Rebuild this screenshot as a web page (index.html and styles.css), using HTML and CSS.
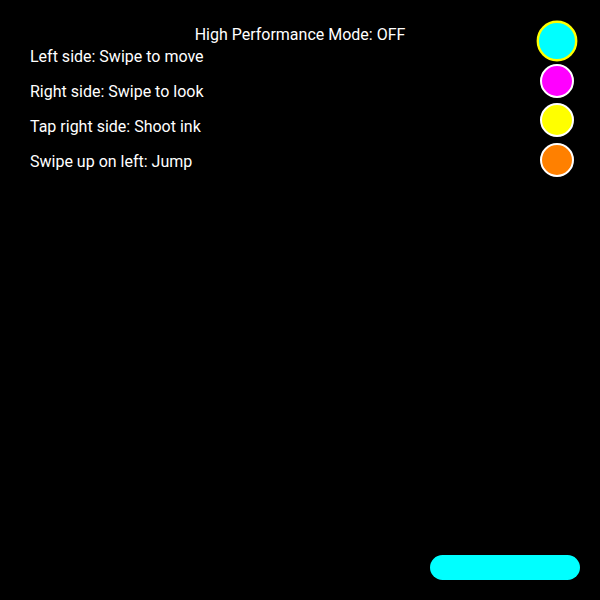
FILE: index.html
```html
<!DOCTYPE html>
<html lang="en">
<head>
  <meta charset="UTF-8" />
  <meta name="viewport" content="width=device-width, initial-scale=1.0"/>
  <title>Ink Game</title>
  <link rel="stylesheet" href="styles.css">
</head>
<body>
  <div class="game">
    <canvas id="scene" class="scene"></canvas>

    <div class="perf-mode" id="perfMode">High Performance Mode: OFF</div>

    <div class="instructions">
      <p>Left side: Swipe to move</p>
      <p>Right side: Swipe to look</p>
      <p>Tap right side: Shoot ink</p>
      <p>Swipe up on left: Jump</p>
    </div>

    <div class="colors">
      <div class="color-btn selected" style="background: #00ffff;"></div>
      <div class="color-btn" style="background: #ff00ff;"></div>
      <div class="color-btn" style="background: #ffff00;"></div>
      <div class="color-btn" style="background: #ff8000;"></div>
    </div>

    <div class="ink-bar">
      <div class="ink-fill" style="width: 100%;"></div>
    </div>
  </div>
</body>
</html>
```

FILE: styles.css
```css
html, body {
  margin: 0;
  padding: 0;
  background: black;
  overflow: hidden;
}

body {
  font-family: Roboto, "Liberation Sans", sans-serif;
  color: white;
}

.game {
  position: relative;
  width: 100vw;
  height: 100vh;
}

.scene {
  display: block;
  width: 100%;
  height: 100%;
  background: black;
}

.perf-mode {
  position: absolute;
  top: 25px;
  left: 0;
  right: 0;
  text-align: center;
  font-size: 16px;
  line-height: 19px;
}

.instructions {
  position: absolute;
  top: 47px;
  left: 30px;
  font-size: 16px;
  line-height: 19px;
}

.instructions p {
  margin: 0 0 16px;
}

.colors {
  position: absolute;
  top: 24px;
  right: 26px;
  display: flex;
  flex-direction: column;
  gap: 5.5px;
}

.color-btn {
  width: 30px;
  height: 30px;
  border: 2px solid white;
  border-radius: 50%;
}

.color-btn.selected {
  border-color: yellow;
  transform: scale(1.2);
}

.ink-bar {
  position: absolute;
  right: 20px;
  bottom: 20px;
  width: 150px;
  height: 25px;
  border-radius: 12.5px;
  overflow: hidden;
}

.ink-fill {
  height: 100%;
  background: #00ffff;
}
```
